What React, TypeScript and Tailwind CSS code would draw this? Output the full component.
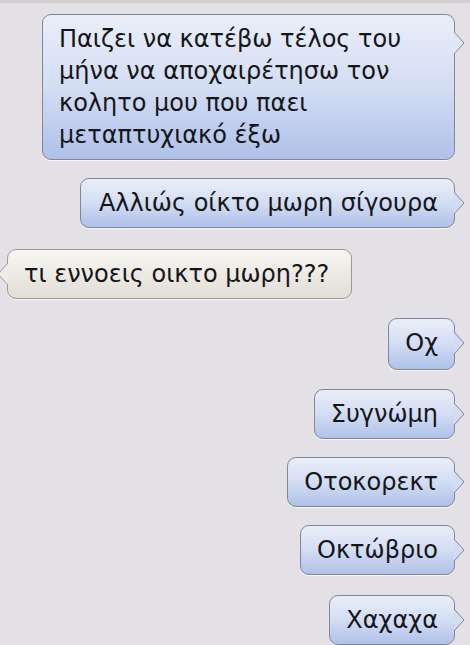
import type { ReactNode } from "react";

type Side = "me" | "them";

const Tail = ({ side, top, fill }: { side: Side; top: number; fill: string }) => {
  const stroke = side === "me" ? "#7f8796" : "#9d9992";
  return (
    <svg
      width="11"
      height="22"
      viewBox="0 0 11 22"
      className={side === "me" ? "absolute left-full" : "absolute right-full -scale-x-100"}
      style={{ top }}
    >
      <polygon points="0,0 10,11 0,22" fill={fill} />
      <polyline points="0,0 10,11 0,22" fill="none" stroke={stroke} strokeWidth="1" />
    </svg>
  );
};

const Bubble = ({
  side,
  children,
  className = "",
  tailTop = 13,
  tailFill,
}: {
  side: Side;
  children: ReactNode;
  className?: string;
  tailTop?: number;
  tailFill?: string;
}) => {
  const me = side === "me";
  return (
    <div
      className={
        "relative rounded-[9px] border px-4 py-[8px] text-[24px] leading-[32px] text-[#161618] shadow-[0_1px_1px_rgba(255,255,255,0.8)] " +
        (me
          ? "self-end border-[#7f8796] bg-gradient-to-b from-[#eaeef9] via-[#d3ddf3] to-[#afc1e9] "
          : "self-start border-[#9d9992] bg-gradient-to-b from-[#f8f6f2] to-[#e1ded7] ") +
        className
      }
    >
      {children}
      <Tail side={side} top={tailTop} fill={tailFill ?? (me ? "#d2dcf2" : "#efece7")} />
    </div>
  );
};

export default function App() {
  return (
    <div
      className="min-h-[645px] w-[470px] overflow-hidden border-t-[3px] border-[#d3cfd3] bg-[#e4e1e6]"
      style={{ fontFamily: '"DejaVu Sans", "Open Sans", sans-serif' }}
    >
      <div className="flex flex-col pt-[11px] pr-[15px] pl-[7px]">
        <Bubble side="me" className="w-[413px] py-[5px]" tailTop={17} tailFill="#e0e7f7">
          Παιζει να κατέβω τέλος του
          <br />
          μήνα να αποχαιρέτησω τον
          <br />
          κολητο μου που παει
          <br />
          μεταπτυχιακό έξω
        </Bubble>

        <Bubble side="me" className="mt-[18px] pl-[18px]">
          Αλλιώς οίκτο μωρη σίγουρα
        </Bubble>

        <Bubble side="them" className="mt-[21px] pr-[22px]">
          τι εννοεις οικτο μωρη???
        </Bubble>

        <Bubble side="me" className="mt-[19px] px-[16px] pb-[10px]">
          Οχ
        </Bubble>

        <Bubble side="me" className="mt-[19px]">
          Συγνώμη
        </Bubble>

        <Bubble side="me" className="mt-[18px]">
          Οτοκορεκτ
        </Bubble>

        <Bubble side="me" className="mt-[18px]">
          Οκτώβριο
        </Bubble>

        <Bubble side="me" className="mt-[20px]">
          Χαχαχα
        </Bubble>
      </div>
    </div>
  );
}
